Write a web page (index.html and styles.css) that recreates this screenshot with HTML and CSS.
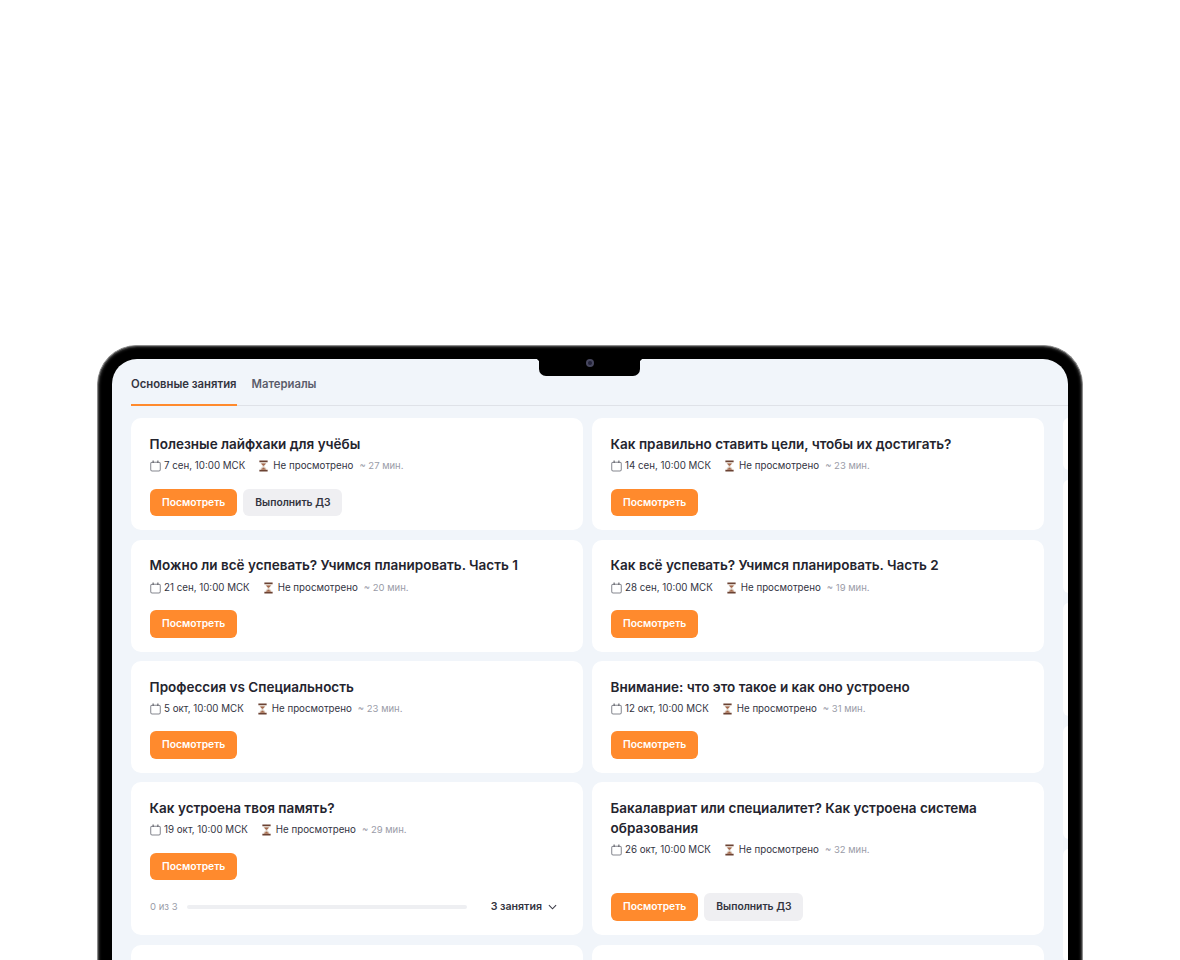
FILE: index.html
```html
<!DOCTYPE html>
<html lang="ru">
<head>
    <title>Занятия</title>
    <meta charset="UTF-8">
    <link rel="stylesheet" href="styles.css">
</head>
<body>
    <svg class="defs" width="0" height="0">
        <symbol id="calendar" viewBox="0 0 12 12">
            <rect x="0.8" y="1.8" width="10.4" height="9.6" rx="1.5" fill="none" stroke="#85878f" stroke-width="1.1"/>
            <path d="M3.4 0V2.6M8.6 0V2.6" stroke="#55565e" stroke-width="1.1" fill="none"/>
        </symbol>
        <symbol id="hourglass" viewBox="0 0 12 12">
            <path d="M1.5 0H10.5V1.8H1.5ZM1.5 10.2H10.5V12H1.5Z" fill="#6b4233"/>
            <path d="M2.6 1.8H9.4C9.4 4 7 5 6.7 6C7 7 9.4 8 9.4 10.2H2.6C2.6 8 5 7 5.3 6C5 5 2.6 4 2.6 1.8Z" fill="#dccfc4"/>
            <path d="M3.6 3.2H8.4C8 4.4 6.4 5.2 6 6C5.6 5.2 4 4.4 3.6 3.2ZM3.3 10.2C3.8 8.8 5.4 8.2 6 7.6C6.6 8.2 8.2 8.8 8.7 10.2Z" fill="#a5694c"/>
        </symbol>
    </svg>

    <div class="laptop">
        <div class="screen">
            <div class="notch"><span class="camera"></span></div>

            <nav class="tabs">
                <a class="tab active">Основные занятия</a>
                <a class="tab">Материалы</a>
            </nav>

            <div class="lessons">
                <section class="card">
                    <h3>Полезные лайфхаки для учёбы</h3>
                    <div class="meta">
                        <svg class="icon"><use href="#calendar"/></svg><span class="date">7 сен, 10:00 МСК</span>
                        <svg class="icon glass"><use href="#hourglass"/></svg><span>Не просмотрено</span><span class="dur">~ 27 мин.</span>
                    </div>
                    <div class="actions"><a class="btn primary">Посмотреть</a><a class="btn ghost">Выполнить ДЗ</a></div>
                </section>
                <section class="card">
                    <h3>Как правильно ставить цели, чтобы их достигать?</h3>
                    <div class="meta">
                        <svg class="icon"><use href="#calendar"/></svg><span class="date">14 сен, 10:00 МСК</span>
                        <svg class="icon glass"><use href="#hourglass"/></svg><span>Не просмотрено</span><span class="dur">~ 23 мин.</span>
                    </div>
                    <div class="actions"><a class="btn primary">Посмотреть</a></div>
                </section>

                <section class="card">
                    <h3>Можно ли всё успевать? Учимся планировать. Часть 1</h3>
                    <div class="meta">
                        <svg class="icon"><use href="#calendar"/></svg><span class="date">21 сен, 10:00 МСК</span>
                        <svg class="icon glass"><use href="#hourglass"/></svg><span>Не просмотрено</span><span class="dur">~ 20 мин.</span>
                    </div>
                    <div class="actions"><a class="btn primary">Посмотреть</a></div>
                </section>
                <section class="card">
                    <h3>Как всё успевать? Учимся планировать. Часть 2</h3>
                    <div class="meta">
                        <svg class="icon"><use href="#calendar"/></svg><span class="date">28 сен, 10:00 МСК</span>
                        <svg class="icon glass"><use href="#hourglass"/></svg><span>Не просмотрено</span><span class="dur">~ 19 мин.</span>
                    </div>
                    <div class="actions"><a class="btn primary">Посмотреть</a></div>
                </section>

                <section class="card">
                    <h3>Профессия vs Специальность</h3>
                    <div class="meta">
                        <svg class="icon"><use href="#calendar"/></svg><span class="date">5 окт, 10:00 МСК</span>
                        <svg class="icon glass"><use href="#hourglass"/></svg><span>Не просмотрено</span><span class="dur">~ 23 мин.</span>
                    </div>
                    <div class="actions"><a class="btn primary">Посмотреть</a></div>
                </section>
                <section class="card">
                    <h3>Внимание: что это такое и как оно устроено</h3>
                    <div class="meta">
                        <svg class="icon"><use href="#calendar"/></svg><span class="date">12 окт, 10:00 МСК</span>
                        <svg class="icon glass"><use href="#hourglass"/></svg><span>Не просмотрено</span><span class="dur">~ 31 мин.</span>
                    </div>
                    <div class="actions"><a class="btn primary">Посмотреть</a></div>
                </section>

                <section class="card has-track">
                    <h3>Как устроена твоя память?</h3>
                    <div class="meta">
                        <svg class="icon"><use href="#calendar"/></svg><span class="date">19 окт, 10:00 МСК</span>
                        <svg class="icon glass"><use href="#hourglass"/></svg><span>Не просмотрено</span><span class="dur">~ 29 мин.</span>
                    </div>
                    <div class="actions"><a class="btn primary">Посмотреть</a></div>
                    <div class="progress">
                        <span class="count">0 из 3</span>
                        <span class="track"></span>
                        <span class="more">3 занятия</span>
                        <svg class="chevron" viewBox="0 0 10 6"><path d="M1 1L5 5L9 1" fill="none" stroke="#3a3a46" stroke-width="1.2"/></svg>
                    </div>
                </section>
                <section class="card">
                    <h3>Бакалавриат или специалитет? Как устроена система образования</h3>
                    <div class="meta">
                        <svg class="icon"><use href="#calendar"/></svg><span class="date">26 окт, 10:00 МСК</span>
                        <svg class="icon glass"><use href="#hourglass"/></svg><span>Не просмотрено</span><span class="dur">~ 32 мин.</span>
                    </div>
                    <div class="actions"><a class="btn primary">Посмотреть</a><a class="btn ghost">Выполнить ДЗ</a></div>
                </section>

                <section class="card"></section>
                <section class="card"></section>

                <aside class="side">
                    <div class="peek peek-short"></div>
                    <div class="peek"></div>
                    <div class="peek"></div>
                    <div class="peek"></div>
                    <div class="peek"></div>
                </aside>
            </div>
        </div>
    </div>
</body>
</html>
```

FILE: styles.css
```css
* {
    box-sizing: border-box;
}

html, body {
    margin: 0;
    height: 960px;
    overflow: hidden;
    background: white;
}

body {
    font-family: Inter, "Noto Sans", sans-serif;
    color: #24242e;
    padding: 345px 97px 0 97px;
}

.defs {
    position: absolute;
}

.laptop {
    width: 985.5px;
    height: 640px;
    background: black;
    border: 1px solid #8c8c8c;
    border-bottom: 0;
    border-radius: 40px 40px 0 0;
    padding: 13px 13.5px 0 14px;
    box-shadow: inset 0 0 0 1px #3c3c3c, inset 0 0 3px 1px #444;
}

.screen {
    position: relative;
    height: 100%;
    background: #f1f5fa;
    border-radius: 25px 25px 0 0;
    padding: 0 0 0 19px;
    overflow: hidden;
}

.notch {
    position: absolute;
    top: 0;
    left: 427.3px;
    width: 101px;
    height: 17px;
    background: black;
    border-radius: 0 0 7px 7px;
    display: flex;
    justify-content: center;
}

.notch::before,
.notch::after {
    content: "";
    position: absolute;
    top: 0;
    width: 4px;
    height: 4px;
}

.notch::before {
    left: -4px;
    background: radial-gradient(circle at 0 100%, transparent 4px, black 4.5px);
}

.notch::after {
    right: -4px;
    background: radial-gradient(circle at 100% 100%, transparent 4px, black 4.5px);
}

.camera {
    width: 8px;
    height: 8px;
    border-radius: 50%;
    background: radial-gradient(circle, #23233a 0 1.5px, #47475f 2.5px);
}

.tabs {
    display: flex;
    gap: 15px;
    height: 47px;
    border-bottom: 1px solid #dfe2e8;
    font-size: 11.3px;
    font-weight: 600;
    line-height: 16px;
    padding-top: 17px;
}

.tab {
    color: #5b5d6b;
    height: 30px;
}

.tab.active {
    color: #34343f;
    border-bottom: 2px solid #ff8a2d;
}

.lessons {
    display: grid;
    grid-template-columns: 452px 452px 60px;
    grid-template-rows: 112px 112px 112px 153px 112px;
    column-gap: 9px;
    row-gap: 9.3px;
    margin-top: 12.4px;
}

.card {
    background: white;
    border-radius: 10px;
    padding: 15.6px 19px 14.5px;
    display: flex;
    flex-direction: column;
}

.side {
    grid-column: 3;
    grid-row: 1 / 6;
    display: flex;
    flex-direction: column;
    gap: 10px;
    margin-left: 10px;
}

.peek {
    flex: none;
    height: 113px;
    background: white;
    border-radius: 6px;
}

.peek-short {
    height: 52px;
}

.card h3 {
    margin: 0 0 0 -0.4px;
    font-size: 13.5px;
    font-weight: 600;
    line-height: 20px;
    color: #24242e;
}

.meta {
    display: flex;
    align-items: center;
    font-size: 9.75px;
    line-height: 14px;
    margin: 5.4px 0 15.4px;
    color: #33343f;
}

.icon {
    width: 11px;
    height: 12px;
    margin-right: 3px;
    flex: none;
}

.glass {
    margin-left: 13px;
    margin-right: 4px;
}

.dur {
    margin-left: 6px;
    font-size: 9.5px;
    color: #9a9ca8;
}

.actions {
    display: flex;
    gap: 6px;
    margin-top: auto;
}

.has-track .actions {
    margin-top: 0;
}

.btn {
    height: 27.5px;
    line-height: 27px;
    border-radius: 6px;
    padding: 0 12px;
    font-size: 10.3px;
    font-weight: 600;
}

.primary {
    background: #ff8a2d;
    color: white;
}

.ghost {
    background: #efeff2;
    color: #33343f;
}

.progress {
    display: flex;
    align-items: center;
    margin: auto 7px 6.5px 0;
    font-size: 9.5px;
    line-height: 14px;
}

.count {
    color: #9a9ca8;
}

.track {
    flex: 1;
    height: 4px;
    margin: 0 24px 0 9px;
    border-radius: 2px;
    background: #eeeff2;
}

.more {
    font-size: 10.6px;
    font-weight: 600;
    color: #33343f;
}

.chevron {
    width: 9px;
    height: 6px;
    margin-left: 6px;
}
```
